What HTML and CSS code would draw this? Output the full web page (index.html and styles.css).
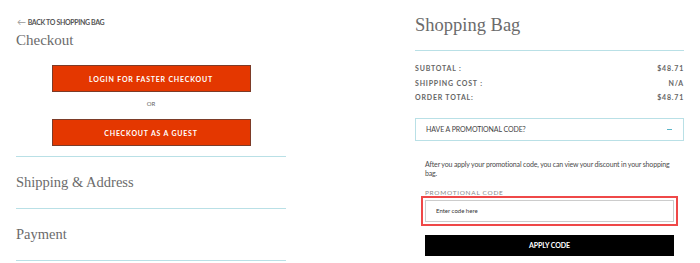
FILE: index.html
```html
<!DOCTYPE html>
<html lang='en'>
<head>
    <meta charset='UTF-8'>
    <meta name='viewport' content='width=device-width, initial-scale=1.0'>
    <title>Checkout</title>
    <link rel="stylesheet" href="styles.css">
</head>
<body>
    <div class='page'>
        <div class='checkout'>
            <a class='back' href='#'><span class='arrow'>&larr;</span>BACK TO SHOPPING BAG</a>
            <h1 class='title'>Checkout</h1>
            <div class='actions'>
                <button class='btn-red'>LOGIN FOR FASTER CHECKOUT</button>
                <p class='or'>OR</p>
                <button class='btn-red'>CHECKOUT AS A GUEST</button>
            </div>
            <div class='step'>Shipping &amp; Address</div>
            <div class='step'>Payment</div>
        </div>
        <div class='bag'>
            <h1 class='bag-title'>Shopping Bag</h1>
            <div class='totals'>
                <div class='row'><span>SUBTOTAL :</span><span>$48.71</span></div>
                <div class='row'><span>SHIPPING COST :</span><span>N/A</span></div>
                <div class='row'><span>ORDER TOTAL:</span><span>$48.71</span></div>
            </div>
            <div class='promo-head'>
                <span>HAVE A PROMOTIONAL CODE?</span>
                <span class='minus'></span>
            </div>
            <div class='promo-body'>
                <p class='promo-text'>After you apply your promotional code, you can view your discount in your shopping bag.</p>
                <label class='promo-label'>PROMOTIONAL CODE</label>
                <input class='promo-input' type='text' placeholder='Enter code here'>
                <button class='btn-black'>APPLY CODE</button>
            </div>
        </div>
    </div>
</body>
</html>
```

FILE: styles.css
```css
*{
    margin: 0;
    padding: 0;
    box-sizing: border-box;
}
body{
    background-color: #ffffff;
    font-family: Lato, "Open Sans", sans-serif;
    color: #555555;
}
.page{
    display: flex;
    justify-content: space-between;
    padding: 0 16px;
}
.checkout{
    width: 270px;
    display: flex;
    flex-direction: column;
}
.back{
    margin-top: 17px;
    height: 10px;
    line-height: 10px;
    font-size: 7px;
    font-weight: bold;
    letter-spacing: -0.35px;
    color: #555555;
    text-decoration: none;
    display: flex;
    align-items: center;
}
.back .arrow{
    color: #999999;
    font-size: 9px;
    font-weight: normal;
    margin-left: 1px;
    margin-right: 2px;
}
.title{
    font-family: "Liberation Serif", serif;
    font-weight: normal;
    font-size: 15px;
    line-height: 20px;
    margin-top: 3px;
    color: #6b6b6b;
}
.actions{
    display: flex;
    flex-direction: column;
    align-items: center;
    margin-top: 15px;
    padding-bottom: 10px;
    border-bottom: 1px solid #b9e0e6;
}
.btn-red{
    width: 199px;
    height: 27px;
    background-color: #e43700;
    border: 1px solid #7c3b28;
    color: #ffffff;
    font-family: Lato, sans-serif;
    font-weight: bold;
    font-size: 7px;
    letter-spacing: 0.8px;
}
.or{
    height: 27px;
    line-height: 24px;
    font-size: 6px;
    color: #666666;
}
.step{
    height: 52px;
    line-height: 51px;
    border-bottom: 1px solid #b9e0e6;
    font-family: "Liberation Serif", serif;
    font-size: 14.5px;
    color: #6b6b6b;
}
.bag{
    width: 269px;
    display: flex;
    flex-direction: column;
}
.bag-title{
    font-family: "Liberation Serif", serif;
    font-weight: normal;
    font-size: 18.5px;
    line-height: 24px;
    margin-top: 13px;
    color: #6b6b6b;
    padding-bottom: 13px;
    border-bottom: 1px solid #b9e0e6;
}
.totals{
    padding-top: 10px;
}
.row{
    display: flex;
    justify-content: space-between;
    height: 14.5px;
    line-height: 14.5px;
    font-size: 7px;
    font-weight: bold;
    letter-spacing: 0.8px;
    color: #666666;
}
.promo-head{
    margin-top: 13px;
    height: 23px;
    border: 1px solid #b9e0e6;
    display: flex;
    justify-content: space-between;
    align-items: center;
    padding: 0 10px;
    font-size: 7px;
    letter-spacing: -0.1px;
    color: #444444;
}
.minus{
    width: 5px;
    height: 1px;
    margin-right: 1px;
    background-color: #5bb5c8;
}
.promo-body{
    padding: 19px 10px 0;
    display: flex;
    flex-direction: column;
}
.promo-text{
    font-size: 7px;
    letter-spacing: -0.15px;
    line-height: 9.5px;
    color: #4a4a4a;
}
.promo-label{
    margin-top: 10px;
    font-size: 6.5px;
    letter-spacing: 0.7px;
    color: #8a8a8a;
}
.promo-input{
    margin-top: 4px;
    height: 22px;
    border: 1px solid #cccccc;
    outline: 2px solid #ef4848;
    outline-offset: 2px;
    padding: 0 10px;
    font-family: Lato, sans-serif;
    font-size: 6px;
    color: #333333;
}
.promo-input::placeholder{
    color: #333333;
}
.btn-black{
    margin-top: 13px;
    height: 21px;
    background-color: #000000;
    border: none;
    color: #ffffff;
    font-family: Lato, sans-serif;
    font-weight: bold;
    font-size: 7px;
    letter-spacing: -0.1px;
}
```
